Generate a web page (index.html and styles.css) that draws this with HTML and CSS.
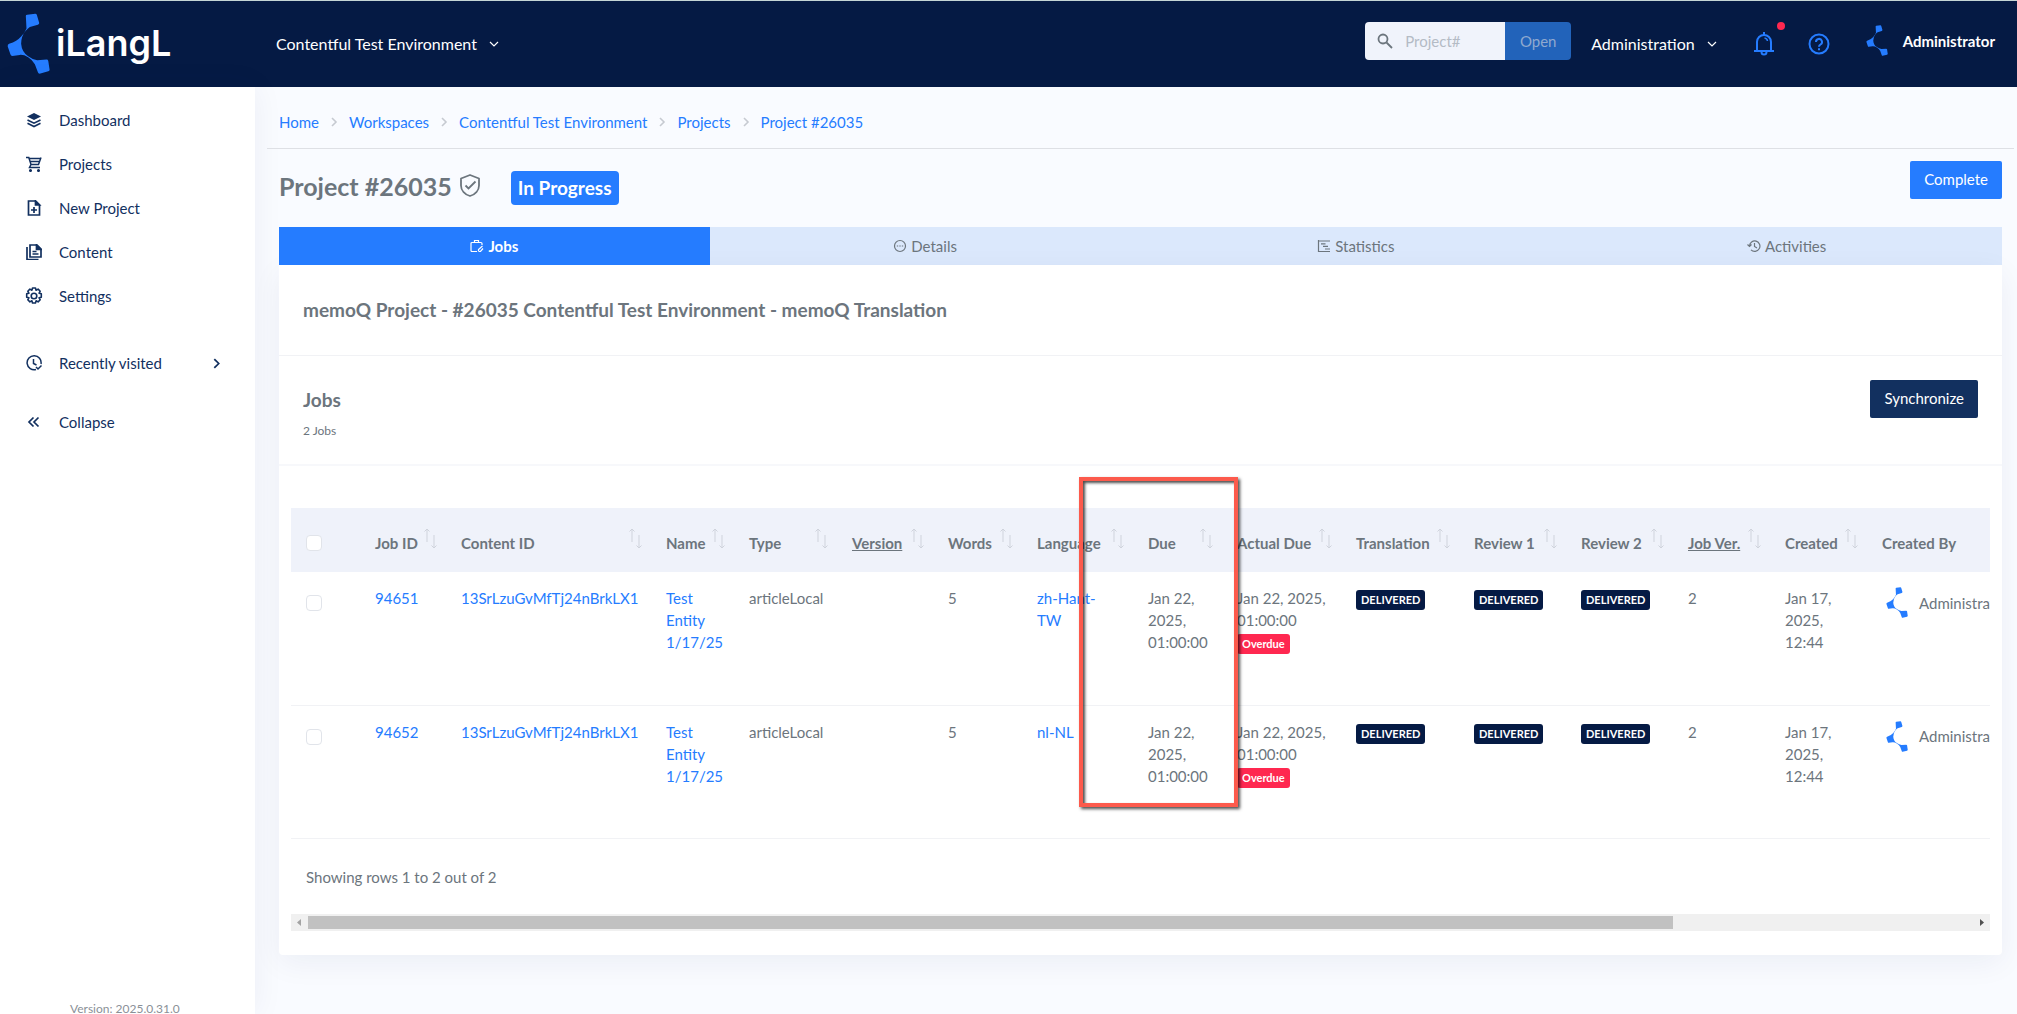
FILE: index.html
```html
<!DOCTYPE html>
<html lang="en">
<head>
  <meta charset="UTF-8">
  <title>Project #26035 - iLangL</title>
  <link rel="stylesheet" href="styles.css">
</head>
<body>
  <!-- shared icons -->
  <svg class="sprite" aria-hidden="true">
    <symbol id="mark" viewBox="22 38 128 182">
      <path fill="#257cff" d="M78 47Q78 43 82 43L106 40Q110 40 111 44L118 68Q118 72 114 73L90 80Q84 84 77 92Q64 108 64 130Q66 155 85 167Q98 177 112 179L140 177Q144 177 145 181L149 207Q149 211 145 212L119 219Q115 219 114 215L105 191Q98 178 85 170Q72 162 60 163L38 166Q33 166 32 161L24 138Q23 132 28 130Q52 122 64 108Q74 98 80 84Z"/>
    </symbol>
    <symbol id="sort" viewBox="0 0 14 24">
      <path d="M4 16V3M1.500 5.500L4 3l2.500 2.500M11 9v13M8.500 19.500L11 22l2.500-2.500" fill="none" stroke="#cfd3dc"/>
    </symbol>
    <symbol id="down" viewBox="0 0 10 10">
      <path d="M1 3l4 4 4-4" fill="none" stroke="currentColor" stroke-width="1.200"/>
    </symbol>
    <symbol id="right" viewBox="0 0 10 10">
      <path d="M3 1l4 4-4 4" fill="none" stroke="currentColor" stroke-width="1.600"/>
    </symbol>
  </svg>

  <header class="topbar">
    <a class="brand" href="#">
      <svg class="brand-mark"><use href="#mark"/></svg>
      <span>iLangL</span>
    </a>
    <button class="menu-btn" type="button">Contentful Test Environment <svg class="caret"><use href="#down"/></svg></button>

    <div class="topbar-right">
      <form class="search">
        <label class="search-box">
          <svg width="16" height="16" viewBox="0 0 16 16" fill="none" stroke="#6c757d" stroke-width="1.800"><circle cx="6" cy="6" r="4.500"/><path d="M9.500 9.500L15 15"/></svg>
          <input type="text" placeholder="Project#" aria-label="Project number">
        </label>
        <button type="button">Open</button>
      </form>
      <button class="menu-btn" type="button">Administration <svg class="caret"><use href="#down"/></svg></button>
      <button class="icon-btn bell" type="button" aria-label="Notifications">
        <svg width="22" height="24" viewBox="0 0 22 24" fill="none" stroke="#257cff" stroke-width="2"><path d="M1 19h20M4 19V10a7 7 0 0 1 14 0v9M11 0v3M8.500 20a2.500 2.500 0 0 0 5 0"/><path d="M11.500 6a3.500 3.500 0 0 1 3 3" stroke-width="1.500"/></svg>
        <span class="dot"></span>
      </button>
      <button class="icon-btn" type="button" aria-label="Help">
        <svg width="22" height="22" viewBox="0 0 22 22" fill="none" stroke="#257cff" stroke-width="2"><circle cx="11" cy="11" r="9.500"/><path d="M8 9a3 3 0 1 1 4.500 2.500C11.300 12.200 11 12.600 11 13.800M11 15.300v2"/></svg>
      </button>
      <a class="user" href="#">
        <svg class="avatar"><use href="#mark"/></svg>
        <span>Administrator</span>
      </a>
    </div>
  </header>

  <div class="page">
    <aside class="sidebar">
      <nav>
        <a href="#">
          <svg viewBox="0 0 16 16"><path fill="currentColor" d="M8 1l7 3.500L8 8 1 4.500z"/><path d="M1.500 8L8 11.200 14.500 8M1.500 11.300L8 14.500l6.500-3.200" fill="none" stroke="currentColor" stroke-width="1.600"/></svg>
          Dashboard
        </a>
        <a href="#">
          <svg viewBox="0 0 16 16" fill="none" stroke="currentColor" stroke-width="1.500"><path d="M0 1.500h2.800l2.200 7h7.500l2.500-7M3 2.500h11M4 5.500h9M5 8.500l-1.500 3H14"/><circle cx="4.500" cy="14.500" r=".8"/><circle cx="12.500" cy="14.500" r=".8"/></svg>
          Projects
        </a>
        <a href="#">
          <svg viewBox="0 0 16 16" fill="none" stroke="currentColor" stroke-width="1.700"><path d="M2.500 1h7l4 4v10h-11zM8 7v6M5 10h6"/><path fill="currentColor" d="M9.500 1v4h4z"/></svg>
          New Project
        </a>
        <a href="#">
          <svg viewBox="0 0 16 16" fill="none" stroke="currentColor" stroke-width="1.700"><path d="M4 1h7l4 4v8H4zM1 3v12.500h11.500M6.500 7.500h4M6.500 10h6"/><path fill="currentColor" d="M10.500 1v4.500H15z"/></svg>
          Content
        </a>
        <a href="#">
          <svg class="gear" viewBox="0 0 18 18" fill="none" stroke="currentColor" stroke-width="1.600"><circle cx="9" cy="9" r="2.800"/><path d="M7.500 1h3l.6 2.200 2-1.100 2.100 2.100-1.100 2 2.200.6v3.400l-2.200.6 1.100 2-2.100 2.100-2-1.100-.6 2.200h-3l-.6-2.200-2 1.100-2.100-2.100 1.100-2L1.700 10.200V6.800l2.200-.6-1.100-2 2.100-2.100 2 1.100z" stroke-linejoin="round"/></svg>
          Settings
        </a>
      </nav>
      <nav>
        <a href="#">
          <svg viewBox="0 0 16 16" fill="none" stroke="currentColor" stroke-width="1.500"><path d="M10 14.500A7 7 0 1 1 15 9M7.500 4v4.500l3 1.500M10 12l2 2 3.500-3.500"/></svg>
          Recently visited
          <svg class="next"><use href="#right"/></svg>
        </a>
      </nav>
      <nav>
        <a href="#">
          <svg viewBox="0 0 16 16" fill="none" stroke="currentColor" stroke-width="1.700"><path d="M7.500 3.500L3 8l4.500 4.500M12.500 3.500L8 8l4.500 4.500"/></svg>
          Collapse
        </a>
      </nav>
      <p class="version">Version: 2025.0.31.0</p>
    </aside>

    <main>
      <nav class="breadcrumb">
        <a href="#">Home</a>
        <svg><use href="#right"/></svg>
        <a href="#">Workspaces</a>
        <svg><use href="#right"/></svg>
        <a href="#">Contentful Test Environment</a>
        <svg><use href="#right"/></svg>
        <a href="#">Projects</a>
        <svg><use href="#right"/></svg>
        <a href="#">Project #26035</a>
      </nav>

      <div class="title-row">
        <div class="title">
          <h1>Project #26035</h1>
          <svg width="20" height="23" viewBox="0 0 20 23" fill="none" stroke="#6c757d" stroke-width="1.800"><path d="M10 1l9 3.500v7c0 5-4 9-9 10.500-5-1.500-9-5.500-9-10.500v-7z" stroke-linejoin="round"/><path d="M5.500 11.500l3 3 7-7"/></svg>
          <span class="status">In Progress</span>
        </div>
        <button class="btn" type="button">Complete</button>
      </div>

      <div class="tabs">
        <a class="active" href="#">
          <svg viewBox="0 0 14 14"><path d="M7 12.500H2A1 1 0 0 1 1 11.500V4.500a1 1 0 0 1 1-1h9a1 1 0 0 1 1 1V6M4.500 3.500v-2h4v2M8.500 12.500v-2l4-3.500M9 12.500h1.500l2.500-3"/></svg>
          Jobs
        </a>
        <a href="#">
          <svg viewBox="0 0 14 14"><circle cx="7" cy="7" r="5.500"/><path d="M3.800 7h1.400M6.300 7h1.400M8.800 7h1.400"/></svg>
          Details
        </a>
        <a href="#">
          <svg viewBox="0 0 14 14"><path d="M1.500 1v12M1 12.500h12M1.500 2H13M4 4.800h4.500M6 7.400h5M8 10h5"/></svg>
          Statistics
        </a>
        <a href="#">
          <svg viewBox="0 0 14 14"><path d="M2.500 7A5.200 5.200 0 1 1 4 10.800M.5 5.500l2 2 2-2M7.500 4v3.500l2.500 1.500"/></svg>
          Activities
        </a>
      </div>

      <section class="card">
        <div class="card-title">
          <h2>memoQ Project - #26035 Contentful Test Environment - memoQ Translation</h2>
        </div>
        <div class="card-head">
          <div>
            <h2>Jobs</h2>
            <p>2 Jobs</p>
          </div>
          <button class="btn dark" type="button">Synchronize</button>
        </div>

        <div class="card-body">
          <div class="table-wrap">
            <table>
              <colgroup>
                <col class="c-check"><col class="c-id"><col class="c-content"><col class="c-name"><col class="c-type">
                <col class="c-version"><col class="c-words"><col class="c-lang"><col class="c-due"><col class="c-actual">
                <col class="c-step"><col class="c-review"><col class="c-review"><col class="c-date"><col class="c-date"><col>
              </colgroup>
              <thead>
                <tr>
                  <th><input type="checkbox" aria-label="Select all jobs"></th>
                  <th><div>Job ID <svg><use href="#sort"/></svg></div></th>
                  <th><div>Content ID <svg><use href="#sort"/></svg></div></th>
                  <th><div>Name <svg><use href="#sort"/></svg></div></th>
                  <th><div>Type <svg><use href="#sort"/></svg></div></th>
                  <th><div><u>Version</u> <svg><use href="#sort"/></svg></div></th>
                  <th><div>Words <svg><use href="#sort"/></svg></div></th>
                  <th><div>Language <svg><use href="#sort"/></svg></div></th>
                  <th><div>Due <svg><use href="#sort"/></svg></div></th>
                  <th><div>Actual Due <svg><use href="#sort"/></svg></div></th>
                  <th><div>Translation <svg><use href="#sort"/></svg></div></th>
                  <th><div>Review 1 <svg><use href="#sort"/></svg></div></th>
                  <th><div>Review 2 <svg><use href="#sort"/></svg></div></th>
                  <th><div><u>Job Ver.</u> <svg><use href="#sort"/></svg></div></th>
                  <th><div>Created <svg><use href="#sort"/></svg></div></th>
                  <th><div>Created By</div></th>
                </tr>
              </thead>
              <tbody>
                <tr>
                  <td><input type="checkbox" aria-label="Select job 94651"></td>
                  <td><a href="#">94651</a></td>
                  <td><a href="#">13SrLzuGvMfTj24nBrkLX1</a></td>
                  <td><a href="#">Test Entity 1/17/25</a></td>
                  <td>articleLocal</td>
                  <td></td>
                  <td>5</td>
                  <td><a href="#">zh-Hant-<br>TW</a></td>
                  <td>Jan 22, 2025, 01:00:00</td>
                  <td>Jan 22, 2025, 01:00:00 <span class="tag late">Overdue</span></td>
                  <td><span class="tag">DELIVERED</span></td>
                  <td><span class="tag">DELIVERED</span></td>
                  <td><span class="tag">DELIVERED</span></td>
                  <td>2</td>
                  <td>Jan 17, 2025, 12:44</td>
                  <td><div class="author"><svg class="avatar"><use href="#mark"/></svg> Administrator</div></td>
                </tr>
                <tr>
                  <td><input type="checkbox" aria-label="Select job 94652"></td>
                  <td><a href="#">94652</a></td>
                  <td><a href="#">13SrLzuGvMfTj24nBrkLX1</a></td>
                  <td><a href="#">Test Entity 1/17/25</a></td>
                  <td>articleLocal</td>
                  <td></td>
                  <td>5</td>
                  <td><a href="#">nl-NL</a></td>
                  <td>Jan 22, 2025, 01:00:00</td>
                  <td>Jan 22, 2025, 01:00:00 <span class="tag late">Overdue</span></td>
                  <td><span class="tag">DELIVERED</span></td>
                  <td><span class="tag">DELIVERED</span></td>
                  <td><span class="tag">DELIVERED</span></td>
                  <td>2</td>
                  <td>Jan 17, 2025, 12:44</td>
                  <td><div class="author"><svg class="avatar"><use href="#mark"/></svg> Administrator</div></td>
                </tr>
              </tbody>
            </table>
            <p class="rows-info">Showing rows 1 to 2 out of 2</p>
          </div>
          <div class="scrollbar">
            <svg viewBox="0 0 17 17"><path fill="#a3a3a3" d="M10 5v7L6 8.500z"/></svg>
            <div class="track"><div class="thumb"></div></div>
            <svg viewBox="0 0 17 17"><path fill="#505050" d="M7 5v7l4-3.500z"/></svg>
          </div>
          <div class="due-marker"></div>
        </div>
      </section>
    </main>
  </div>
</body>
</html>
```

FILE: styles.css
```css
* {
  box-sizing: border-box;
}

body {
  margin: 0;
  min-height: 100vh;
  display: flex;
  flex-direction: column;
  font-family: Lato, sans-serif;
  font-size: 15px;
  line-height: 22px;
  color: #6c757d;
  background: #f9fbff;
}

h1, h2, p {
  margin: 0;
}

a {
  color: #257cff;
  text-decoration: none;
}

button, input {
  font: inherit;
}

button {
  border: 0;
  cursor: pointer;
}

svg {
  flex: none;
}

.sprite {
  display: none;
}

/* top bar */
.topbar {
  display: flex;
  align-items: center;
  padding: 12px 22px 13px 7px;
  border-top: 1px solid #c5d5d5;
  background: #051a44;
  color: #fff;
}

.brand {
  display: flex;
  gap: 6px;
  width: 269px;
  color: #fff;
  font-family: Inter, sans-serif;
  font-size: 36px;
  font-weight: 600;
  line-height: 60px;
}

.brand-mark {
  width: 43px;
  height: 61px;
}

.menu-btn {
  display: flex;
  align-items: center;
  gap: 12px;
  padding: 0;
  background: none;
  color: #fff;
  font-size: 16px;
}

.caret {
  width: 10px;
  height: 10px;
}

.topbar-right {
  display: flex;
  align-items: center;
  margin-left: auto;
}

.search {
  display: flex;
  width: 206px;
  height: 38px;
  margin: 0 20px 6px 0;
  border-radius: 4px;
  overflow: hidden;
}

.search-box {
  display: flex;
  flex: 1;
  align-items: center;
  gap: 12px;
  padding-left: 12px;
  background: #f0f3fb;
}

.search input {
  width: 90px;
  padding: 0;
  border: 0;
  outline: 0;
  background: none;
}

.search input::placeholder {
  color: #b4bbc5;
}

.search button {
  width: 66px;
  padding: 0;
  background: #2263ba;
  color: #8fa9cf;
}

.icon-btn {
  display: flex;
  margin-left: 33px;
  padding: 0;
  background: none;
}

.bell {
  position: relative;
  margin-left: 36px;
}

.dot {
  position: absolute;
  top: -10px;
  right: -10px;
  width: 8px;
  height: 8px;
  border-radius: 50%;
  background: #ff2850;
}

.user {
  display: flex;
  align-items: center;
  gap: 15px;
  margin: 0 0 6px 36px;
  color: #fff;
  font-weight: bold;
}

.avatar {
  width: 22px;
  height: 31px;
}

/* layout */
.page {
  display: flex;
  flex: 1;
}

.sidebar {
  display: flex;
  flex: none;
  flex-direction: column;
  width: 255px;
  padding-top: 11px;
  background: #fff;
  box-shadow: 0 0 30px rgba(20, 30, 80, 0.06);
}

.sidebar nav {
  margin-bottom: 23px;
}

.sidebar nav + nav {
  margin-bottom: 15px;
}

.sidebar a {
  display: flex;
  align-items: center;
  gap: 17px;
  padding: 11px 33px 11px 26px;
  color: #12305f;
}

.sidebar svg {
  width: 16px;
  height: 16px;
}

.sidebar .gear {
  width: 18px;
  height: 18px;
  margin: 0 -1px;
}

.sidebar .next {
  width: 11px;
  height: 11px;
  margin-left: auto;
}

.version {
  margin-top: auto;
  padding-left: 70px;
  font-size: 12px;
  line-height: 10px;
  color: #8a9097;
}

main {
  flex: 1;
  min-width: 0;
  padding: 0 15px 24px 24px;
}

.breadcrumb {
  display: flex;
  align-items: center;
  gap: 10px;
  margin: 0 -12px;
  padding: 24px 12px 15px;
  border-bottom: 1px solid #dee0e5;
}

.breadcrumb svg {
  width: 10px;
  height: 10px;
  color: #c6cad1;
}

.title-row {
  display: flex;
  justify-content: space-between;
  align-items: flex-start;
  padding: 12px 0 22px;
}

.title {
  display: flex;
  align-items: center;
  margin-top: 10px;
}

h1 {
  margin-right: 8px;
  padding-bottom: 4px;
  font-size: 25px;
  line-height: 30px;
}

.title svg {
  margin-bottom: 6px;
}

.status {
  margin-left: 31px;
  padding: 6px 7px;
  border-radius: 4px;
  background: #257cff;
  color: #fff;
  font-size: 19px;
  font-weight: bold;
}

.btn {
  padding: 7px 14px 9px;
  border-radius: 2px;
  background: #257cff;
  color: #fff;
}

.btn.dark {
  background: #12305f;
}

.tabs {
  display: grid;
  grid-template-columns: repeat(4, 1fr);
  background: #dbe8fc;
}

.tabs a {
  display: flex;
  justify-content: center;
  align-items: center;
  gap: 4px;
  padding: 8px;
  color: #6c757d;
}

.tabs .active {
  background: #257cff;
  color: #fff;
  font-weight: bold;
}

.tabs svg {
  width: 14px;
  height: 14px;
  fill: none;
  stroke: currentColor;
  stroke-width: 1.2;
}

/* card */
.card {
  background: #fff;
  border-radius: 0 0 4px 4px;
  box-shadow: 0 8px 30px rgba(20, 30, 80, 0.06);
}

.card-title {
  padding: 33px 24px;
  border-bottom: 1px solid #f1f2f5;
}

h2 {
  font-size: 19px;
  line-height: 24px;
}

.card-head {
  display: flex;
  justify-content: space-between;
  align-items: flex-start;
  padding: 24px;
  border-bottom: 2px solid #f7f8fb;
}

.card-head h2 {
  margin: 8px 0 10px;
}

.card-head p {
  font-size: 12px;
  line-height: 18px;
}

.card-body {
  position: relative;
  padding: 42px 12px 24px;
}

.table-wrap {
  overflow: hidden;
}

table {
  width: 2079px;
  table-layout: fixed;
  border-collapse: collapse;
}

.c-check { width: 72px; }
.c-id { width: 86px; }
.c-content { width: 205px; }
.c-name { width: 83px; }
.c-type { width: 103px; }
.c-version { width: 96px; }
.c-words { width: 89px; }
.c-lang { width: 111px; }
.c-due { width: 89px; }
.c-actual { width: 119px; }
.c-step { width: 118px; }
.c-review { width: 107px; }
.c-date { width: 97px; }

thead {
  background: #eff2fa;
}

th {
  padding: 16px 12px;
  text-align: left;
}

th div {
  display: flex;
  justify-content: space-between;
  align-items: flex-end;
  height: 28px;
  white-space: nowrap;
}

th svg {
  align-self: flex-start;
  width: 14px;
  height: 24px;
}

td {
  height: 133px;
  padding: 15px 12px;
  border-bottom: 1px solid #f1f2f5;
  vertical-align: top;
}

input[type="checkbox"] {
  appearance: none;
  display: block;
  width: 16px;
  height: 16px;
  margin: 8px 3px;
  border: 1px solid #e1e4ea;
  border-radius: 4px;
  background: #fff;
}

th input[type="checkbox"] {
  margin: 11px 3px 5px;
}

.tag {
  display: inline-block;
  padding: 0 5px;
  border-radius: 3px;
  background: #051a44;
  color: #fff;
  font-size: 11px;
  font-weight: bold;
  line-height: 20px;
}

.tag.late {
  background: #ff2850;
}

.author {
  display: flex;
  align-items: center;
  gap: 11px;
  padding-left: 4px;
}

.rows-info {
  padding: 27px 15px 26px;
}

.scrollbar {
  display: flex;
  background: #f0f0f0;
}

.scrollbar svg {
  width: 17px;
  height: 17px;
}

.track {
  flex: 1;
  padding: 2px 0;
}

.thumb {
  width: 82%;
  height: 13px;
  background: #c1c1c1;
}

/* frame round the Due column */
.due-marker {
  position: absolute;
  top: 11px;
  left: 800px;
  width: 159px;
  height: 330px;
  border: 4px solid #fc5a4c;
  box-shadow: 2px 2px 3px rgba(0, 0, 0, 0.7), inset 2px 2px 3px rgba(0, 0, 0, 0.7);
  pointer-events: none;
}
```
